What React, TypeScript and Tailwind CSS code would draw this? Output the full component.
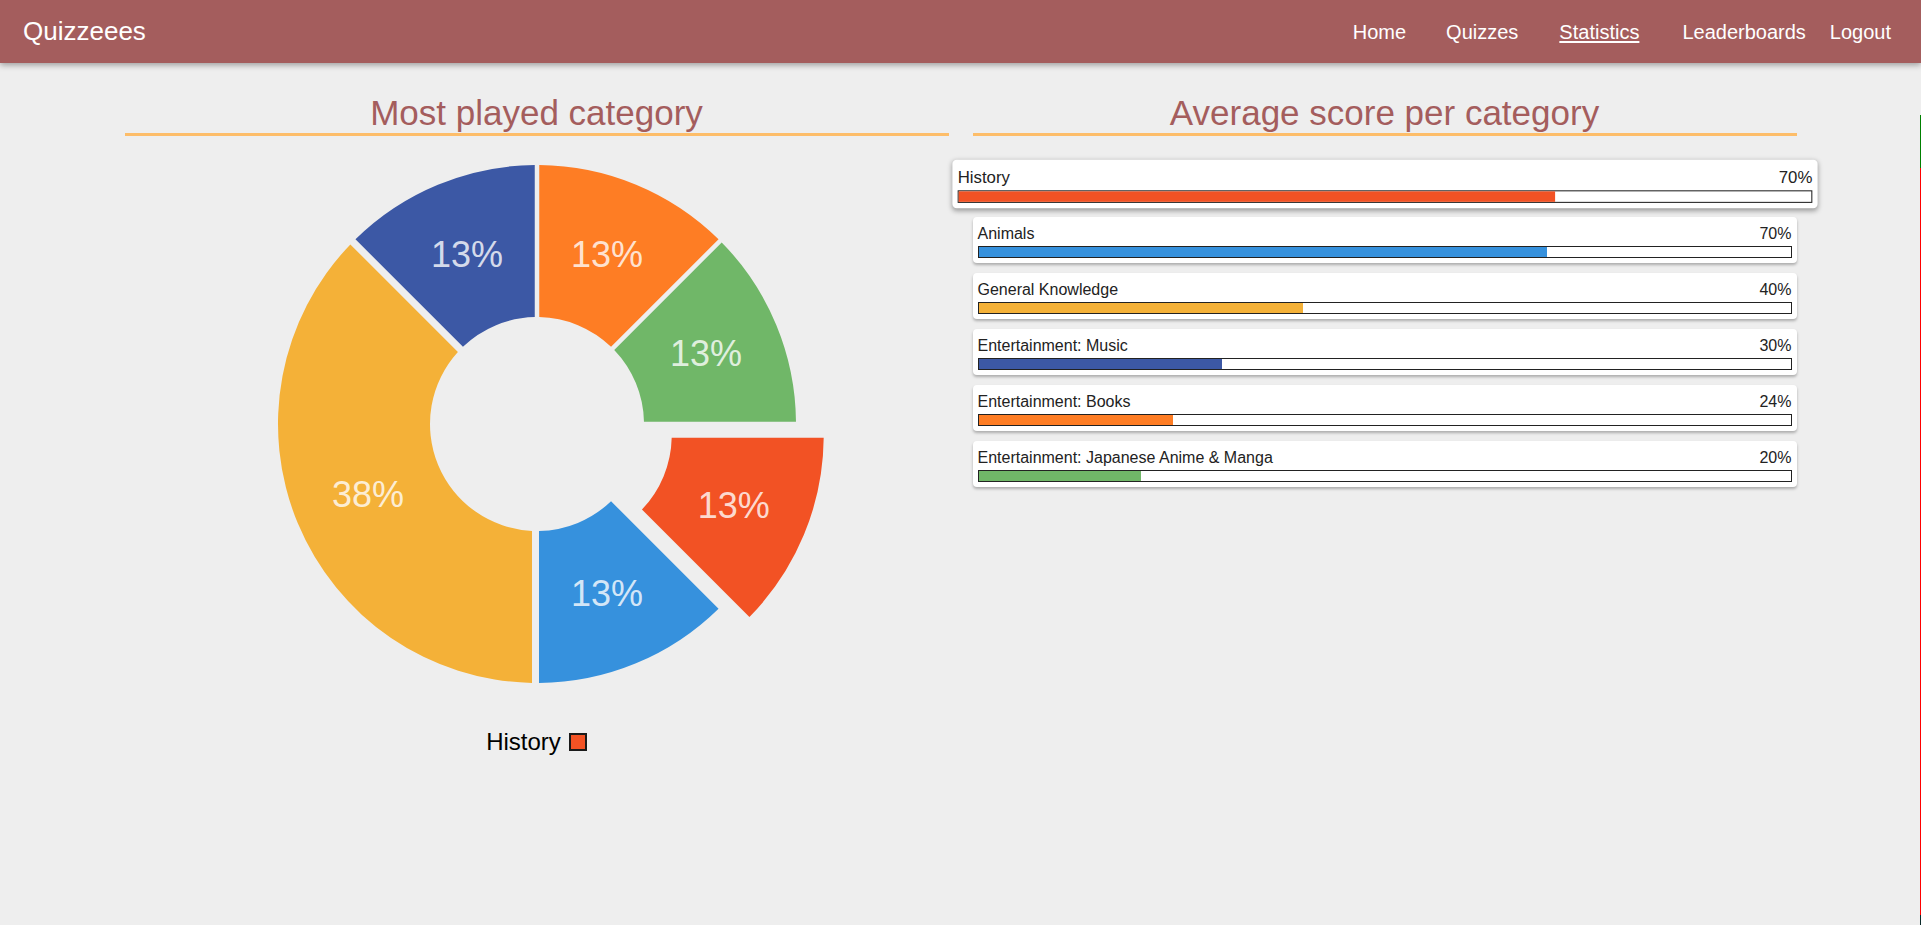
import React from "react";

interface Score {
  name: string;
  value: number;
  color: string;
}

interface Slice {
  start: number;
  end: number;
  color: string;
  label: string;
  gapStart: number;
  gapEnd: number;
  offset?: number;
}

const scores: Score[] = [
  { name: "History", value: 70, color: "#f25224" },
  { name: "Animals", value: 70, color: "#3691dd" },
  { name: "General Knowledge", value: 40, color: "#f4b138" },
  { name: "Entertainment: Music", value: 30, color: "#3c58a5" },
  { name: "Entertainment: Books", value: 24, color: "#fe7d24" },
  { name: "Entertainment: Japanese Anime & Manga", value: 20, color: "#70b768" },
];

const slices: Slice[] = [
  { start: 0, end: 45, color: "#fe7d24", label: "13%", gapStart: 2.25, gapEnd: 2.25 },
  { start: 45, end: 90, color: "#70b768", label: "13%", gapStart: 2.25, gapEnd: 2.25 },
  { start: 90, end: 135, color: "#f25224", label: "13%", gapStart: 2.25, gapEnd: 2.25, offset: 30 },
  { start: 135, end: 180, color: "#3691dd", label: "13%", gapStart: 2.25, gapEnd: 2 },
  { start: 180, end: 315, color: "#f4b138", label: "38%", gapStart: 5, gapEnd: 5 },
  { start: 315, end: 360, color: "#3c58a5", label: "13%", gapStart: 2.25, gapEnd: 2.25 },
];

const CX = 412;
const CY = 278;
const R = 259;
const r = 107;

const rad = (deg: number) => (deg * Math.PI) / 180;

function pt(deg: number, radius: number, dx: number, dy: number) {
  const a = rad(deg);
  return [CX + dx + radius * Math.sin(a), CY + dy - radius * Math.cos(a)];
}

function slicePath(s: Slice, dx: number, dy: number) {
  const oa0 = s.start + (Math.asin(s.gapStart / R) * 180) / Math.PI;
  const oa1 = s.end - (Math.asin(s.gapEnd / R) * 180) / Math.PI;
  const ia0 = s.start + (Math.asin(s.gapStart / r) * 180) / Math.PI;
  const ia1 = s.end - (Math.asin(s.gapEnd / r) * 180) / Math.PI;
  const large = s.end - s.start > 180 ? 1 : 0;
  const [x1, y1] = pt(oa0, R, dx, dy);
  const [x2, y2] = pt(oa1, R, dx, dy);
  const [x3, y3] = pt(ia1, r, dx, dy);
  const [x4, y4] = pt(ia0, r, dx, dy);
  return `M${x1} ${y1} A${R} ${R} 0 ${large} 1 ${x2} ${y2} L${x3} ${y3} A${r} ${r} 0 ${large} 0 ${x4} ${y4} Z`;
}

function Donut() {
  return (
    <svg width="824" height="560" viewBox="0 0 824 560" className="block mt-[10px]">
      {slices.map((s, i) => {
        const mid = (s.start + s.end) / 2;
        const off = s.offset ?? 0;
        const dx = off * Math.sin(rad(mid));
        const dy = -off * Math.cos(rad(mid));
        const [lx, ly] = pt(mid, (R + r) / 2, dx, dy);
        return (
          <g key={i}>
            <path d={slicePath(s, dx, dy)} fill={s.color} />
            <text
              x={lx}
              y={ly}
              textAnchor="middle"
              dominantBaseline="central"
              fill="#ffffff"
              fillOpacity={0.8}
              fontSize={36}
              fontFamily="'Liberation Sans', Arial, sans-serif"
            >
              {s.label}
            </text>
          </g>
        );
      })}
    </svg>
  );
}

function ScoreCard({ score, active }: { score: Score; active?: boolean }) {
  return (
    <div
      className={
        active
          ? "bg-white rounded-[4px] p-[5px] scale-105 shadow-[0_2px_5px_rgba(0,0,0,0.35)]"
          : "bg-white rounded-[4px] p-[5px] shadow-[0_2px_3px_rgba(0,0,0,0.28)]"
      }
    >
      <div className="flex justify-between text-[16px] leading-6 text-[#222]">
        <span>{score.name}</span>
        <span>{score.value}%</span>
      </div>
      <div className="h-3 border border-[#222] bg-white">
        <div className="h-full" style={{ width: `${score.value}%`, backgroundColor: score.color }} />
      </div>
    </div>
  );
}

export default function App() {
  return (
    <div className="relative min-h-screen bg-[#eeeeee] font-['Liberation_Sans',Arial,sans-serif] overflow-hidden">
      {/* Navbar */}
      <nav className="relative z-10 h-[63px] bg-[#a45d5d] flex items-center justify-between pl-[23px] pr-[30px] text-white shadow-[0_2px_6px_rgba(0,0,0,0.35)]">
        <span className="text-[26px]">Quizzeees</span>
        <div className="flex items-center text-[20px]">
          <a>Home</a>
          <a className="ml-10">Quizzes</a>
          <a className="ml-[41px] underline underline-offset-2">Statistics</a>
          <a className="ml-[43px]">Leaderboards</a>
          <a className="ml-6">Logout</a>
        </div>
      </nav>

      {/* Content */}
      <main className="w-[1672px] mx-auto pt-[27px] grid grid-cols-2 gap-6">
        <section className="flex flex-col items-center">
          <h2 className="w-full text-center text-[35px] leading-[40px] text-[#a45d5d] pt-[3px] border-b-[3px] border-[#fdbd69]">
            Most played category
          </h2>
          <Donut />
          <div className="mt-[22px] flex items-center gap-2 text-[24px] leading-7 text-black">
            <span>History</span>
            <span className="w-[18px] h-[18px] border-2 border-[#1a1a1a] bg-[#f25224]" />
          </div>
        </section>

        <section>
          <h2 className="text-center text-[35px] leading-[40px] text-[#a45d5d] pt-[3px] border-b-[3px] border-[#fdbd69]">
            Average score per category
          </h2>
          <div className="mt-[25px] flex flex-col gap-2.5">
            {scores.map((s, i) => (
              <ScoreCard key={s.name} score={s} active={i === 0} />
            ))}
          </div>
        </section>
      </main>

      {/* thin edge marker at the right */}
      <div className="absolute right-0 top-[115px] w-px flex flex-col">
        <div className="h-[53px] bg-[#008000]" />
        <div className="h-[747px] bg-[#ff0000]" />
        <div className="h-[10px] bg-[#0b2b2b]" />
      </div>
    </div>
  );
}
